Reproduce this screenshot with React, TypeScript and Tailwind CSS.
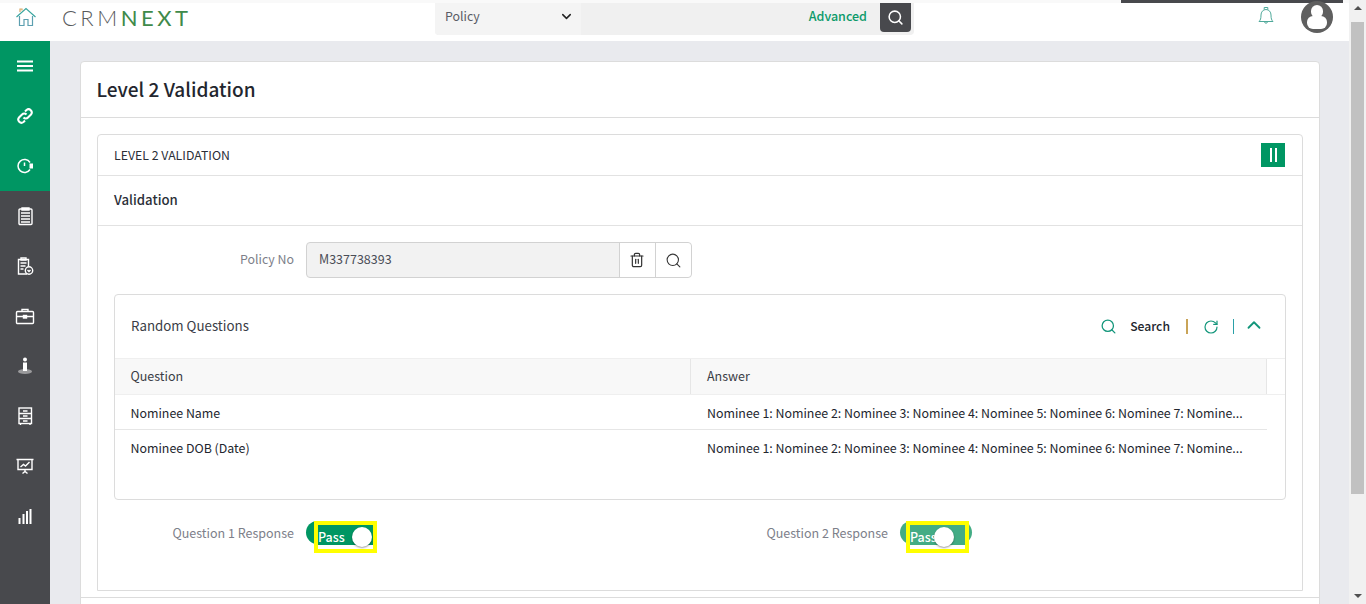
import { ChevronDown, ChevronUp, RotateCw, Search, Trash2 } from 'lucide-react';

const FONT = "font-['Noto_Sans_CJK_SC','Noto_Sans',sans-serif]";
const ANSWER = 'Nominee 1: Nominee 2: Nominee 3: Nominee 4: Nominee 5: Nominee 6: Nominee 7: Nomine...';

function HomeIcon() {
  return (
    <svg width="22" height="20" viewBox="0 0 22 20" fill="none" strokeWidth="1.2">
      <path d="M1.500 10 11 1.500 20.500 10" stroke="#3aa6a0" />
      <path d="M4.500 9v9.500h4.500v-6h4v6h4.500V9" stroke="#5c9fb0" />
      <path d="M7 3.500V2h-2v3" stroke="#d9a866" />
    </svg>
  );
}

function SideIcon({ children }: { children: React.ReactNode }) {
  return (
    <div className="h-[50px] flex items-center justify-center">
      <svg width="20" height="20" viewBox="0 0 20 20" fill="none" stroke="#fff" strokeWidth="1.4">
        {children}
      </svg>
    </div>
  );
}

function Toggle({ dim, knobLeft, width, boxLeft }: { dim?: boolean; knobLeft: number; width: number; boxLeft: number }) {
  return (
    <div className="relative h-[23px] rounded-full" style={{ width, backgroundColor: dim ? '#43ac85' : '#009663' }}>
      <div className="absolute top-0 w-[63px] h-[32px] border-[4px] border-[#ffff00]" style={{ left: boxLeft, backgroundColor: dim ? '#43ac85' : '#009663' }}>
        <div className="h-[20px] flex items-center">
          <span className="text-white text-[12.500px] font-medium mt-[4px]">Pass</span>
        </div>
        <div className="absolute left-0 right-0 bottom-0 h-[4px] bg-white" />
      </div>
      <div
        className="absolute top-[6px] w-[20px] h-[20px] rounded-full bg-white shadow-[0_1px_2px_rgba(0,0,0,0.4)]"
        style={{ left: knobLeft }}
      />
    </div>
  );
}

export default function App() {
  return (
    <div className={`${FONT} w-full h-[604px] overflow-hidden flex text-[#2b2f38] bg-white`}>
      <div className="flex-1 min-w-0 flex flex-col">
        {/* top bar */}
        <header className="h-[41px] shrink-0 bg-white relative flex items-center">
          <div className="absolute top-0 left-0 right-0 h-[3px] bg-[#f9f9f9]" />
          <div className="absolute top-0 left-[1121px] w-[222px] h-[3px] bg-[#48494d]" />
          <div className="w-[50px] flex justify-center mb-[7px] pl-[1px]"><HomeIcon /></div>
          <div className="ml-[12px] mb-[6px] font-['Lato',sans-serif] text-[22px] leading-none tracking-[3.500px] whitespace-nowrap">
            <span className="text-[#58595b] font-light">CRM</span>
            <span className="text-[#3f8a4a]">NEXT</span>
          </div>
          <div className="absolute left-[435px] top-[3px] w-[479px] h-[32px] flex rounded-b bg-[#f0f0f0]">
            <div className="w-[146px] bg-[#f4f4f4] rounded-bl flex items-center justify-between pl-[10px] pr-[7px] pb-[6px] text-[12.400px] text-[#5a5c66]">
              Policy
              <ChevronDown size={15} strokeWidth={2.4} className="text-[#222]" />
            </div>
            <div className="flex-1 flex items-center justify-end pr-[13px] pb-[6px] text-[12.500px] font-medium text-[#0d9a6a]">Advanced</div>
            <div className="w-[31px] h-[29px] mr-[3px] bg-[#48494d] rounded-b-sm flex items-center justify-center">
              <Search size={17} strokeWidth={2.2} className="text-white" />
            </div>
          </div>
          <div className="absolute left-[1257px] top-[6px]">
            <svg width="18" height="19" viewBox="0 0 18 19" fill="none" stroke="#4fa99a" strokeWidth="1">
              <path d="M2 15.500c1.500-1.500 2-3 2-6.500 0-3 2-5.500 5-5.500s5 2.500 5 5.500c0 3.500.5 5 2 6.500z" />
              <path d="M7.200 3.500V1.500h3.600v2M7.500 16c.3 1.600 2.700 1.600 3 0" />
            </svg>
          </div>
          <div className="absolute left-[1301px] top-[1px] w-[32px] h-[32px] rounded-full bg-[#5f5f5f] overflow-hidden">
            <div className="absolute left-[10px] top-[4px] w-[12px] h-[13px] rounded-full bg-white" />
            <div className="absolute left-[6px] top-[15px] w-[20px] h-[13px] rounded-[6px] bg-white" />
          </div>
        </header>

        <div className="flex-1 flex min-h-0">
          {/* side nav */}
          <aside className="w-[50px] shrink-0 bg-[#48494d] flex flex-col">
            <div className="bg-[#009663] h-[150px] flex flex-col">
              <SideIcon>
                <path d="M2 5.500h16M2 10h16M2 14.500h16" strokeWidth="2" />
              </SideIcon>
              <SideIcon>
                <path d="M8.500 11.500a3 3 0 0 0 4.500 0l3-3a3.200 3.200 0 0 0-4.500-4.500l-1.500 1.500" strokeWidth="2" />
                <path d="M11.500 8.500a3 3 0 0 0-4.500 0l-3 3a3.200 3.200 0 0 0 4.500 4.500l1.500-1.500" strokeWidth="2" />
              </SideIcon>
              <SideIcon>
                <path d="M15 6.500A6.500 6.500 0 1 0 15 13.500" strokeWidth="1.500" />
                <path d="M9.500 6.500v3.500" strokeWidth="1.500" />
                <rect x="14.500" y="7.500" width="3.500" height="5" fill="#fff" stroke="none" />
              </SideIcon>
            </div>
            <SideIcon>
              <rect x="4" y="3" width="13" height="15.500" rx="1" />
              <path d="M6 7h9M6 10h9M6 13h9M6 16h9" strokeWidth="1.500" />
              <path d="M7 2h7v2H7z" fill="#fff" />
            </SideIcon>
            <SideIcon>
              <path d="M12 18H3.500V3.500h10V10" />
              <path d="M6 2h5v2H6zM5.500 7h6M5.500 10h5M5.500 13h3" />
              <circle cx="14" cy="14.500" r="3.700" />
              <path d="M12.500 14l1.500 1.500 1.500-1.500" />
            </SideIcon>
            <SideIcon>
              <rect x="1.500" y="5.500" width="17" height="12" rx="1" />
              <path d="M7 5.500V3.500h6v2M1.500 10.500h7M11.500 10.500h7" />
              <rect x="8.500" y="9.500" width="3" height="2.500" fill="#fff" />
            </SideIcon>
            <SideIcon>
              <ellipse cx="10" cy="15.500" rx="7" ry="2.500" fill="#9a9a9c" stroke="none" />
              <circle cx="10" cy="3.500" r="2" fill="#fff" stroke="none" />
              <path d="M8 6.500h4v8.500H8z" fill="#fff" stroke="none" />
            </SideIcon>
            <SideIcon>
              <rect x="4" y="2" width="12.500" height="15.500" />
              <path d="M4 7.500h12.500M4 12.500h12.500M8 5h4.500M8 10h4.500M8 15h4.500M5.500 18v1M15 18v1" />
            </SideIcon>
            <SideIcon>
              <path d="M1.500 3.500h17M3 3.500v10h14v-10M10 13.500v2M7.500 17.500l2.500-2 2.500 2" />
              <path d="M5.500 11l3-2.500 2 1.500 4-4" />
            </SideIcon>
            <SideIcon>
              <path d="M4.500 18v-6M8.500 18V8M12 18V5M15.500 18V3" strokeWidth="2" />
            </SideIcon>
          </aside>

          {/* page body */}
          <main className="flex-1 min-w-0 bg-[#e9eaee] pl-[30px] pr-[29px] pt-[20px]">
            <div className="bg-white border border-[#dcdcdc] rounded-t-[4px] h-[600px]">
              <div className="h-[56px] border-b border-[#dcdcdc] flex items-center pl-[15.500px] text-[19px] font-medium text-[#23262e]">
                Level 2 Validation
              </div>
              <div className="px-[16px] pt-[16px]">
                <div className="border border-[#dcdcdc] rounded-t-[4px] h-[457px]">
                  <div className="h-[41px] border-b border-[#e2e2e2] flex items-center justify-between pl-[16px] pr-[17px] text-[12.300px]">
                    LEVEL 2 VALIDATION
                    <div className="w-[24px] h-[24px] bg-[#009663] flex items-center justify-center gap-[3px]">
                      <span className="w-[2px] h-[14px] bg-white" />
                      <span className="w-[2px] h-[14px] bg-white" />
                    </div>
                  </div>
                  <div className="h-[50px] border-b border-[#e2e2e2] flex items-center pl-[16px] pb-[2px] text-[13.200px] font-medium">
                    Validation
                  </div>
                  <div className="px-[16px] pt-[16px]">
                    <div className="flex items-center h-[36px]">
                      <div className="w-[180px] text-right text-[12.400px] text-[#7d808a] mr-[12px] pb-[2px]">Policy No</div>
                      <div className="w-[386px] h-[36px] flex border border-[#d2d2d2] rounded-[4px] bg-[#f2f2f2] text-[12.500px] text-[#4a4d57]">
                        <div className="flex-1 flex items-center pl-[12px] pb-[1px]">M337738393</div>
                        <div className="w-[36px] border-l border-[#d2d2d2] flex items-center justify-center bg-white pr-[2px]">
                          <Trash2 size={16} strokeWidth={1.8} className="text-[#333]" />
                        </div>
                        <div className="w-[36px] border-l border-[#d2d2d2] flex items-center justify-center bg-white rounded-r-[4px]">
                          <Search size={17} strokeWidth={1.5} className="text-[#333]" />
                        </div>
                      </div>
                    </div>

                    <div className="mt-[16px] border border-[#dcdcdc] rounded-[4px] h-[206px]">
                      <div className="h-[63px] flex items-center justify-between pl-[16px] pr-[20px]">
                        <span className="text-[13.300px] text-[#3a3d46] pb-[2px]">Random Questions</span>
                        <div className="flex items-center text-[#13967b]">
                          <Search size={17} strokeWidth={1.8} />
                          <span className="ml-[13px] text-[12.200px] font-medium text-[#23262e]">Search</span>
                          <span className="ml-[16px] w-[1.500px] h-[15px] bg-[#c9a458]" />
                          <RotateCw size={16} strokeWidth={1.8} className="ml-[15px]" />
                          <span className="ml-[14px] w-[1.500px] h-[15px] bg-[#2aa0a8]" />
                          <ChevronUp size={22} strokeWidth={2} className="ml-[9px] mb-[3px]" />
                        </div>
                      </div>
                      <div className="h-[37px] flex bg-[#f8f8f8] border-y border-[#efefef] text-[12.500px] text-[#3a3d46]">
                        <div className="w-[576px] flex items-center pl-[15.500px] pb-[1px] border-r border-[#e6e6e6]">Question</div>
                        <div className="w-[576px] flex items-center pl-[16px] pb-[1px] border-r border-[#e6e6e6]">Answer</div>
                        <div className="flex-1 bg-white" />
                      </div>
                      <div className="w-[1152px] h-[35px] flex items-center border-b border-[#e6e6e6] text-[12.400px] text-[#23262e]">
                        <div className="w-[576px] pl-[15.500px] pt-[3px]">Nominee Name</div>
                        <div className="w-[576px] pl-[16px] pt-[3px] whitespace-nowrap">{ANSWER}</div>
                      </div>
                      <div className="w-[1152px] h-[35px] flex items-center text-[12.400px] text-[#23262e]">
                        <div className="w-[576px] pl-[15.500px] pt-[2px]">Nominee DOB (Date)</div>
                        <div className="w-[576px] pl-[16px] pt-[2px] whitespace-nowrap">{ANSWER}</div>
                      </div>
                    </div>

                    <div className="mt-[21px] flex text-[12.500px] text-[#7d808a]">
                      <div className="w-[594px] flex items-start">
                        <div className="w-[180px] text-right mr-[12px] leading-[24px]">Question 1 Response</div>
                        <Toggle width={65} knobLeft={46} boxLeft={8} />
                      </div>
                      <div className="flex items-start">
                        <div className="w-[180px] text-right mr-[12px] leading-[24px]">Question 2 Response</div>
                        <Toggle dim width={72} knobLeft={34} boxLeft={6} />
                      </div>
                    </div>
                  </div>
                </div>
              </div>
              <div className="mt-[6px] border-t border-[#dcdcdc]" />
            </div>
          </main>
        </div>
      </div>

      {/* scrollbar */}
      <div className="w-[17px] shrink-0 bg-[#f1f1f1] relative flex justify-center">
        <div className="absolute top-[6px] w-0 h-0 border-x-[4px] border-x-transparent border-b-[4px] border-b-[#505050]" />
        <div className="absolute top-[22px] h-[472px] left-[2px] right-[2px] bg-[#c1c1c1]" />
        <div className="absolute bottom-[6px] w-0 h-0 border-x-[4px] border-x-transparent border-t-[4px] border-t-[#505050]" />
      </div>
    </div>
  );
}
